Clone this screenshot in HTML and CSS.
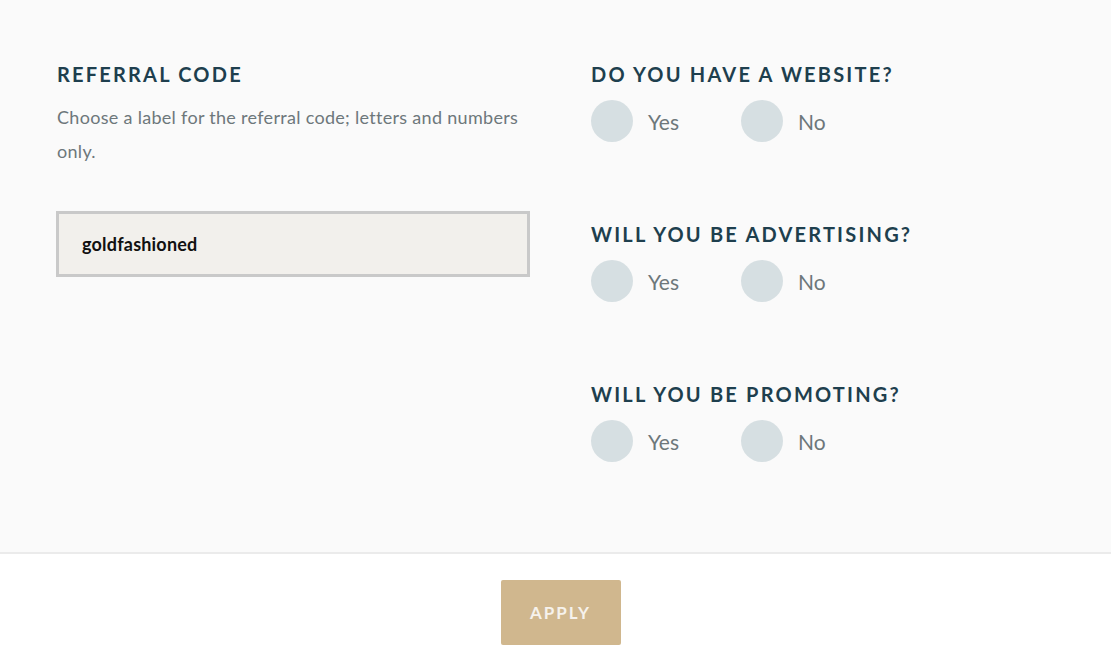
FILE: index.html
```html
<!DOCTYPE html>
<html>
<head>
<meta charset="utf-8">
<link rel="stylesheet" href="styles.css">
</head>
<body>
<div class="page">
  <main class="form">
    <section class="col-left">
      <h2 class="heading">REFERRAL CODE</h2>
      <p class="desc">Choose a label for the referral code; letters and numbers only.</p>
      <div class="input">goldfashioned</div>
    </section>
    <section class="col-right">
      <div class="question">
        <h2 class="heading">DO YOU HAVE A WEBSITE?</h2>
        <div class="options">
          <label class="option"><span class="radio"></span><span class="opt-text">Yes</span></label>
          <label class="option"><span class="radio"></span><span class="opt-text">No</span></label>
        </div>
      </div>
      <div class="question">
        <h2 class="heading">WILL YOU BE ADVERTISING?</h2>
        <div class="options">
          <label class="option"><span class="radio"></span><span class="opt-text">Yes</span></label>
          <label class="option"><span class="radio"></span><span class="opt-text">No</span></label>
        </div>
      </div>
      <div class="question">
        <h2 class="heading">WILL YOU BE PROMOTING?</h2>
        <div class="options">
          <label class="option"><span class="radio"></span><span class="opt-text">Yes</span></label>
          <label class="option"><span class="radio"></span><span class="opt-text">No</span></label>
        </div>
      </div>
    </section>
  </main>
  <footer class="footer">
    <button class="apply">APPLY</button>
  </footer>
</div>
</body>
</html>
```

FILE: styles.css
```css
* { box-sizing: border-box; }
html, body { margin: 0; padding: 0; }
body {
  font-family: Lato, "Open Sans", sans-serif;
  background: #ffffff;
}
.page {
  width: 1111px;
  height: 661px;
  display: flex;
  flex-direction: column;
}
.form {
  height: 554px;
  background: #fafafa;
  border-bottom: 2px solid #ebebeb;
  display: grid;
  grid-template-columns: 474px 1fr;
  column-gap: 61px;
  padding: 62px 0 0 56px;
}
.heading {
  margin: 0;
  font-size: 20px;
  line-height: 24px;
  font-weight: 700;
  letter-spacing: 2.2px;
  color: #1e3f4e;
}
.col-left .heading { padding-left: 1px; }
.desc {
  margin: 14px 0 0 0;
  max-width: 470px;
  font-size: 18px;
  line-height: 34px;
  letter-spacing: 0.3px;
  color: #6d777b;
  padding-left: 1px;
}
.input {
  margin-top: 43px;
  height: 66px;
  border: 3px solid #c9c9c9;
  background: #f2f0ec;
  font-size: 18px;
  font-weight: 700;
  letter-spacing: 0.2px;
  color: #111;
  padding-left: 23px;
  display: flex;
  align-items: center;
}
.question { height: 160px; }
.options {
  display: flex;
  margin-top: 14px;
}
.option {
  width: 150px;
  display: flex;
  align-items: center;
}
.radio {
  width: 42px;
  height: 42px;
  border-radius: 50%;
  background: #d6dfe2;
  flex: none;
}
.opt-text {
  margin-left: 15px;
  font-size: 21px;
  color: #6d777b;
}
.footer {
  flex: 1;
  display: flex;
  justify-content: center;
  padding-top: 26px;
  padding-left: 10px;
}
.apply {
  width: 120px;
  height: 65px;
  border: none;
  border-radius: 2px;
  background: #d0b78e;
  color: #f6f2ec;
  font-family: Lato, sans-serif;
  font-weight: 700;
  font-size: 17px;
  letter-spacing: 2px;
  cursor: pointer;
}
```
